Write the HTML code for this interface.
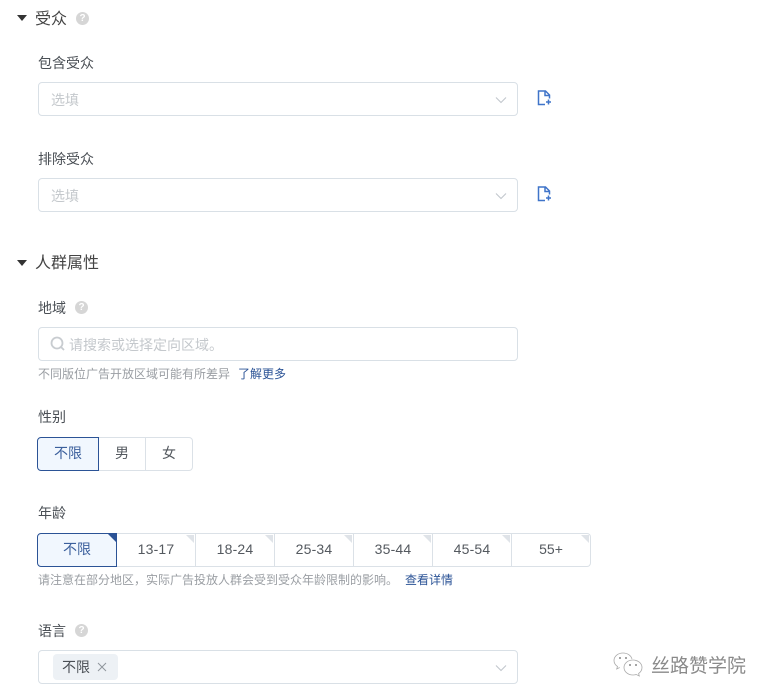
<!DOCTYPE html>
<html lang="zh">
<head>
<meta charset="utf-8">
<style>
html,body{margin:0;padding:0;background:#fff}
body{width:770px;height:698px;position:relative;overflow:hidden;font-family:"Liberation Sans","Noto Sans CJK SC",sans-serif;color:#4a4f55;font-size:14px}
.a{position:absolute;white-space:nowrap;line-height:20px}
.tri{position:absolute;width:0;height:0;border-left:5px solid transparent;border-right:5px solid transparent;border-top:6px solid #333}
.h{font-size:16px;color:#444}
.l{font-size:14px;color:#4a4f55}
.box{position:absolute;left:38px;width:478px;height:32px;border:1px solid #d9e0e6;border-radius:4px;background:#fff}
.ph{color:#c4c8cc;font-size:14px}
.q{position:absolute;width:13px;height:13px;border-radius:50%;background:#d6d6d6;color:#fff;font-size:10px;line-height:13px;text-align:center;font-weight:bold}
.tip{font-size:12px;color:#9a9ea3}
.link{font-size:12px;color:#2b5396}
.seg{position:absolute;box-sizing:border-box;height:34px;border:1px solid #dbe1e7;text-align:center;line-height:31px;font-size:14px;color:#54595f;background:#fff;border-left:0}
.sel{border:1px solid #2b5396;background:#f1f7fe;color:#3b5f9c;z-index:2}
.cn{position:absolute;right:1px;top:1px;width:0;height:0;border-top:8px solid #dfe3e8;border-left:8px solid transparent}
.sel .cn{border-top-color:#2b5396;right:0;top:0}
svg{position:absolute;overflow:visible}
</style>
</head>
<body>
<div class="tri" style="left:17px;top:15px"></div>
<div class="a h" style="left:35px;top:10px">受众</div>
<div class="q" style="left:76px;top:12px">?</div>

<div class="a l" style="left:38px;top:53px">包含受众</div>
<div class="box" style="top:82px"></div>
<div class="a ph" style="left:51px;top:90px">选填</div>
<svg style="left:495px;top:96px" width="12" height="8" viewBox="0 0 12 8"><path d="M1 1.500l5 5 5-5" fill="none" stroke="#c2c7cc" stroke-width="1.100"/></svg>
<svg style="left:537px;top:90px" width="16" height="16" viewBox="0 0 16 16"><path d="M8 14.500H1.500V1h7l4 4v3.500M8 1.500V5.500h4.500M11.500 9.500v5M9 12h5" fill="none" stroke="#3f74c9" stroke-width="1.500"/></svg>

<div class="a l" style="left:38px;top:149px">排除受众</div>
<div class="box" style="top:178px"></div>
<div class="a ph" style="left:51px;top:186px">选填</div>
<svg style="left:495px;top:192px" width="12" height="8" viewBox="0 0 12 8"><path d="M1 1.500l5 5 5-5" fill="none" stroke="#c2c7cc" stroke-width="1.100"/></svg>
<svg style="left:537px;top:186px" width="16" height="16" viewBox="0 0 16 16"><path d="M8 14.500H1.500V1h7l4 4v3.500M8 1.500V5.500h4.500M11.500 9.500v5M9 12h5" fill="none" stroke="#3f74c9" stroke-width="1.500"/></svg>

<div class="tri" style="left:17px;top:260px"></div>
<div class="a h" style="left:35px;top:254px">人群属性</div>

<div class="a l" style="left:38px;top:298px">地域</div>
<div class="q" style="left:75px;top:301px">?</div>
<div class="box" style="top:327px"></div>
<svg style="left:50px;top:336px" width="16" height="16" viewBox="0 0 16 16"><circle cx="7" cy="7" r="5.500" fill="none" stroke="#c8ccd0" stroke-width="1.800"/><path d="M11 11l3 3" stroke="#c8ccd0" stroke-width="1.800"/></svg>
<div class="a ph" style="left:69px;top:335px">请搜索或选择定向区域。</div>
<div class="a tip" style="left:38px;top:364px">不同版位广告开放区域可能有所差异</div>
<div class="a link" style="left:238px;top:364px">了解更多</div>

<div class="a l" style="left:38px;top:407px">性别</div>
<div class="seg sel" style="left:37px;top:437px;width:62px;border-radius:4px 0 0 4px">不限</div>
<div class="seg" style="left:99px;top:437px;width:47px">男</div>
<div class="seg" style="left:146px;top:437px;width:47px;border-radius:0 4px 4px 0">女</div>

<div class="a l" style="left:38px;top:503px">年龄</div>
<div class="seg sel" style="left:37px;top:533px;width:80px;border-radius:4px 0 0 4px">不限<i class="cn"></i></div>
<div class="seg" style="left:117px;top:533px;width:79px;letter-spacing:.2px">13-17<i class="cn"></i></div>
<div class="seg" style="left:196px;top:533px;width:79px;letter-spacing:.2px">18-24<i class="cn"></i></div>
<div class="seg" style="left:275px;top:533px;width:79px;letter-spacing:.2px">25-34<i class="cn"></i></div>
<div class="seg" style="left:354px;top:533px;width:79px;letter-spacing:.2px">35-44<i class="cn"></i></div>
<div class="seg" style="left:433px;top:533px;width:79px;letter-spacing:.2px">45-54<i class="cn"></i></div>
<div class="seg" style="left:512px;top:533px;width:79px;border-radius:0 4px 4px 0">55+<i class="cn"></i></div>
<div class="a tip" style="left:38px;top:570px">请注意在部分地区，实际广告投放人群会受到受众年龄限制的影响。</div>
<div class="a link" style="left:405px;top:570px">查看详情</div>

<div class="a l" style="left:38px;top:621px">语言</div>
<div class="q" style="left:75px;top:624px">?</div>
<div class="box" style="top:650px"></div>
<div style="position:absolute;left:53px;top:654px;width:65px;height:26px;border-radius:4px;background:#edf1f5"></div>
<div class="a l" style="left:62px;top:657px">不限</div>
<svg style="left:97px;top:662px" width="10" height="10" viewBox="0 0 10 10"><path d="M1 1l8 8M9 1l-8 8" stroke="#8f959b" stroke-width="1"/></svg>
<svg style="left:495px;top:664px" width="12" height="8" viewBox="0 0 12 8"><path d="M1 1.500l5 5 5-5" fill="none" stroke="#c2c7cc" stroke-width="1.100"/></svg>

<svg style="left:613px;top:652px" width="32" height="28" viewBox="0 0 32 28"><path d="M10 1C5 1 1 4.300 1 8.500c0 2.500 1.300 4.500 3.500 6l-.8 2.500 3-1.500" fill="#fff" stroke="#aaa" stroke-width=".8"/><path d="M10 1c4.500 0 8 2.500 9 6" fill="none" stroke="#aaa" stroke-width=".8"/><path d="M20 8c-5 0-9 3.300-9 7.500s4 7.500 9 7.500c1.200 0 2.300-.2 3.300-.5l3 1.500-.7-2.500c2-1.400 3.400-3.500 3.400-6C29 11.300 25 8 20 8z" fill="#fff" stroke="#aaa" stroke-width=".8"/><circle cx="7" cy="6" r="1" fill="#888"/><circle cx="13" cy="6" r="1" fill="#888"/><circle cx="17" cy="13" r="1" fill="#888"/><circle cx="23" cy="13" r="1" fill="#888"/></svg>
<div class="a" style="left:651px;top:656px;font-size:19px;line-height:22px;color:#8a8a8a">丝路赞学院</div>
</body>
</html>
